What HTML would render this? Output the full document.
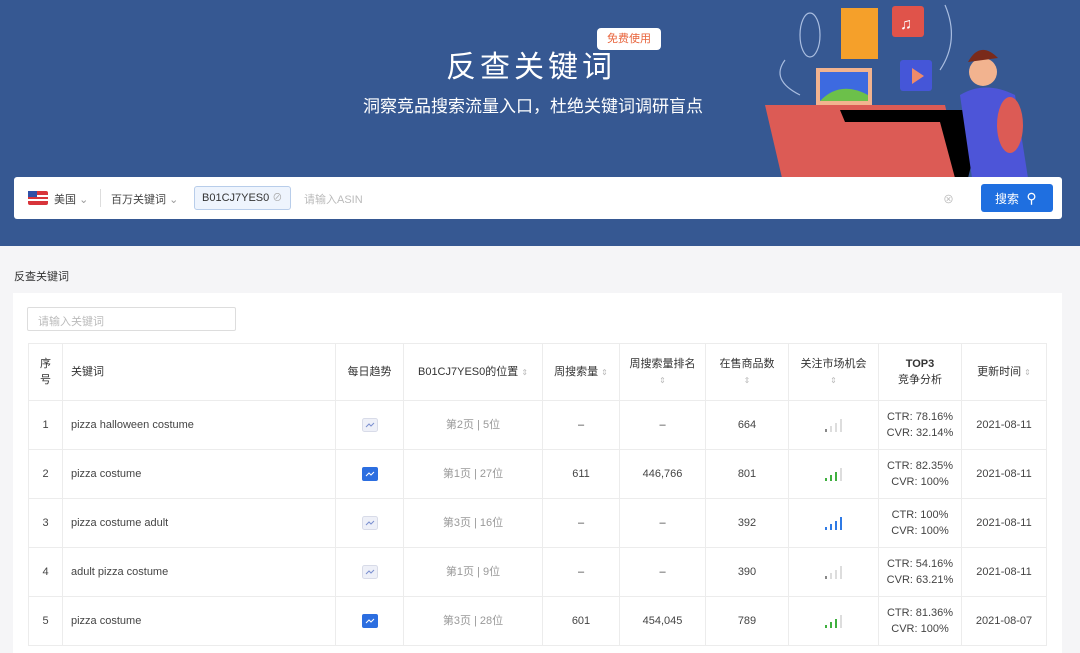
<!DOCTYPE html>
<html><head><meta charset="utf-8"><style>
*{box-sizing:border-box;margin:0;padding:0}
body{width:1080px;height:647px;overflow:hidden;background:#f5f5f7;font-family:"Liberation Sans","Noto Sans CJK SC",sans-serif;color:#333;position:relative}
.banner{position:absolute;left:0;top:0;width:1080px;height:246px;background:#365892;overflow:hidden}
.title{position:absolute;left:446px;top:48px;font-size:30px;color:#fff;letter-spacing:4px;line-height:40px}
.sub{position:absolute;left:363px;top:95px;font-size:17px;color:#fff;line-height:24px}
.free{position:absolute;left:597px;top:28px;width:64px;height:22px;background:#fff;border-radius:4px;color:#e8643c;font-size:11px;text-align:center;line-height:22px}
.sbar{position:absolute;left:14px;top:177px;width:1048px;height:42px;background:#fff;border-radius:3px}
.sbar span{position:absolute;font-size:11px;color:#444;top:14px}
.tag{position:absolute;left:194px;top:186px;width:97px;height:24px;border:1px solid #b8cdea;background:#eef4fd;border-radius:3px;font-size:11px;color:#333;padding:5px 7px;white-space:nowrap;line-height:13px}
.btn{position:absolute;left:981px;top:184px;width:72px;height:28px;background:#1f6fe0;border-radius:3px;color:#fff;font-size:12px;line-height:28px;padding-left:14px}
.lbl{position:absolute;left:14px;top:268px;font-size:11px;color:#333}
.panel{position:absolute;left:13px;top:293px;width:1049px;height:360px;background:#fff}
.inp{position:absolute;left:27px;top:307px;width:209px;height:24px;border:1px solid #ddd;border-radius:2px;font-size:11px;color:#bbb;padding:5px 10px}
table{position:absolute;left:28px;top:343px;border-collapse:collapse;font-size:11px;color:#444;table-layout:fixed}
td,th{border:1px solid #ececec;text-align:center;font-weight:normal}
th{height:57px;color:#333;font-size:11px;line-height:16px}
td{height:49px;line-height:16px}
.l{text-align:left;padding-left:8px}
.ar{color:#bbb;font-size:8px}
.g{color:#999}
svg{vertical-align:middle}
</style></head><body>
<div class="banner">
 <div class="title">反查关键词</div>
 <div class="free">免费使用</div>
 <div class="sub">洞察竞品搜索流量入口，杜绝关键词调研盲点</div>
 <svg style="position:absolute;left:740px;top:0" width="340" height="246">
  <g fill="none" stroke="#a9bde0" stroke-width="1.2"><ellipse cx="70" cy="35" rx="10" ry="22"/><path d="M45 60 Q30 80 60 95"/><path d="M205 5 Q220 40 200 70"/></g>
  <rect x="101" y="8" width="37" height="51" fill="#f5a02a"/>
  <rect x="152" y="6" width="32" height="31" rx="3" fill="#e0534a"/>
  <text x="160" y="29" fill="#fff" font-size="16">♫</text>
  <rect x="160" y="60" width="32" height="31" rx="3" fill="#4556d8"/>
  <path d="M172 68 L184 76 L172 84Z" fill="#f08a6a"/>
  <rect x="76" y="68" width="56" height="37" fill="#f2b38f"/><rect x="80" y="72" width="48" height="29" fill="#3d6ae0"/><path d="M80 101 Q100 80 128 95 V101Z" fill="#6cc04a"/>
  <path d="M25 105 L205 105 L222 178 L42 178Z" fill="#dc5b55"/>
  <path d="M100 110 L245 110 L228 178 L215 178 L200 122 L105 122Z" fill="#000"/>
  <circle cx="243" cy="72" r="14" fill="#f2b38f"/><path d="M228 62 Q240 40 258 58Z" fill="#7a2a1a"/>
  <path d="M220 95 Q245 80 275 95 L288 178 L232 178 Z" fill="#4d55d8"/>
  <ellipse cx="270" cy="125" rx="13" ry="28" fill="#dc5b55"/>
 </svg>
</div>
<div class="sbar">
 <svg style="position:absolute;left:14px;top:14px" width="20" height="14"><rect width="20" height="14" rx="2" fill="#d8343a"/><rect y="4" width="20" height="2" fill="#fff"/><rect y="8" width="20" height="2" fill="#fff"/><rect width="9" height="6" fill="#3050a8"/></svg>
 <span style="left:40px">美国 <span style="position:static;color:#999">⌄</span></span>
 <div style="position:absolute;left:86px;top:12px;width:1px;height:18px;background:#ddd"></div>
 <span style="left:97px">百万关键词 <span style="position:static;color:#999">⌄</span></span>
 <span style="left:290px;color:#bbb">请输入ASIN</span>
 <span style="left:929px;color:#bbb">⊗</span>
</div>
<div class="tag">B01CJ7YES0 <span style="color:#aaa;font-size:10px">⊘</span></div>
<div class="btn">搜索 <span style="font-size:14px;margin-left:4px">⚲</span></div>
<div class="lbl">反查关键词</div>
<div class="panel"></div>
<div class="inp">请输入关键词</div>
<table>
<colgroup><col width="34"><col width="273"><col width="68"><col width="139"><col width="77"><col width="86"><col width="83"><col width="90"><col width="83"><col width="85"></colgroup>
<tr><th>序<br>号</th><th class="l">关键词</th><th>每日趋势</th><th>B01CJ7YES0的位置 <span class="ar">⇕</span></th><th>周搜索量 <span class="ar">⇕</span></th><th>周搜索量排名<br><span class="ar">⇕</span></th><th>在售商品数<br><span class="ar">⇕</span></th><th>关注市场机会<br><span class="ar">⇕</span></th><th><b>TOP3</b><br>竞争分析</th><th>更新时间 <span class="ar">⇕</span></th></tr>
<tr><td>1</td><td class="l">pizza halloween costume</td><td><svg width="16" height="14"><rect x=".5" y=".5" width="15" height="13" rx="2" fill="#eef0f8" stroke="#d8dbe8"/><path d="M4 9 L7 6 L9 8 L12 5" stroke="#7a8fd0" fill="none"/></svg></td><td class="g">第2页 | 5位</td><td>–</td><td>–</td><td>664</td><td><svg width="18" height="13"><rect x="0" y="10" width="2" height="3" fill="#888"/><rect x="5" y="7" width="2" height="6" fill="#ddd"/><rect x="10" y="4" width="2" height="9" fill="#ddd"/><rect x="15" y="0" width="2" height="13" fill="#ddd"/></svg></td><td>CTR: 78.16%<br>CVR: 32.14%</td><td>2021-08-11</td></tr>
<tr><td>2</td><td class="l">pizza costume</td><td><svg width="16" height="14"><rect width="16" height="14" rx="2" fill="#2c6ee0"/><path d="M4 9 L7 6 L9 8 L12 5" stroke="#fff" fill="none"/></svg></td><td class="g">第1页 | 27位</td><td>611</td><td>446,766</td><td>801</td><td><svg width="18" height="13"><rect x="0" y="10" width="2" height="3" fill="#3fb03f"/><rect x="5" y="7" width="2" height="6" fill="#3fb03f"/><rect x="10" y="4" width="2" height="9" fill="#3fb03f"/><rect x="15" y="0" width="2" height="13" fill="#ddd"/></svg></td><td>CTR: 82.35%<br>CVR: 100%</td><td>2021-08-11</td></tr>
<tr><td>3</td><td class="l">pizza costume adult</td><td><svg width="16" height="14"><rect x=".5" y=".5" width="15" height="13" rx="2" fill="#eef0f8" stroke="#d8dbe8"/><path d="M4 9 L7 6 L9 8 L12 5" stroke="#7a8fd0" fill="none"/></svg></td><td class="g">第3页 | 16位</td><td>–</td><td>–</td><td>392</td><td><svg width="18" height="13"><rect x="0" y="10" width="2" height="3" fill="#2f7ae5"/><rect x="5" y="7" width="2" height="6" fill="#2f7ae5"/><rect x="10" y="4" width="2" height="9" fill="#2f7ae5"/><rect x="15" y="0" width="2" height="13" fill="#2f7ae5"/></svg></td><td>CTR: 100%<br>CVR: 100%</td><td>2021-08-11</td></tr>
<tr><td>4</td><td class="l">adult pizza costume</td><td><svg width="16" height="14"><rect x=".5" y=".5" width="15" height="13" rx="2" fill="#eef0f8" stroke="#d8dbe8"/><path d="M4 9 L7 6 L9 8 L12 5" stroke="#7a8fd0" fill="none"/></svg></td><td class="g">第1页 | 9位</td><td>–</td><td>–</td><td>390</td><td><svg width="18" height="13"><rect x="0" y="10" width="2" height="3" fill="#888"/><rect x="5" y="7" width="2" height="6" fill="#ddd"/><rect x="10" y="4" width="2" height="9" fill="#ddd"/><rect x="15" y="0" width="2" height="13" fill="#ddd"/></svg></td><td>CTR: 54.16%<br>CVR: 63.21%</td><td>2021-08-11</td></tr>
<tr><td>5</td><td class="l">pizza costume</td><td><svg width="16" height="14"><rect width="16" height="14" rx="2" fill="#2c6ee0"/><path d="M4 9 L7 6 L9 8 L12 5" stroke="#fff" fill="none"/></svg></td><td class="g">第3页 | 28位</td><td>601</td><td>454,045</td><td>789</td><td><svg width="18" height="13"><rect x="0" y="10" width="2" height="3" fill="#3fb03f"/><rect x="5" y="7" width="2" height="6" fill="#3fb03f"/><rect x="10" y="4" width="2" height="9" fill="#3fb03f"/><rect x="15" y="0" width="2" height="13" fill="#ddd"/></svg></td><td>CTR: 81.36%<br>CVR: 100%</td><td>2021-08-07</td></tr>
</table>
</body></html>
